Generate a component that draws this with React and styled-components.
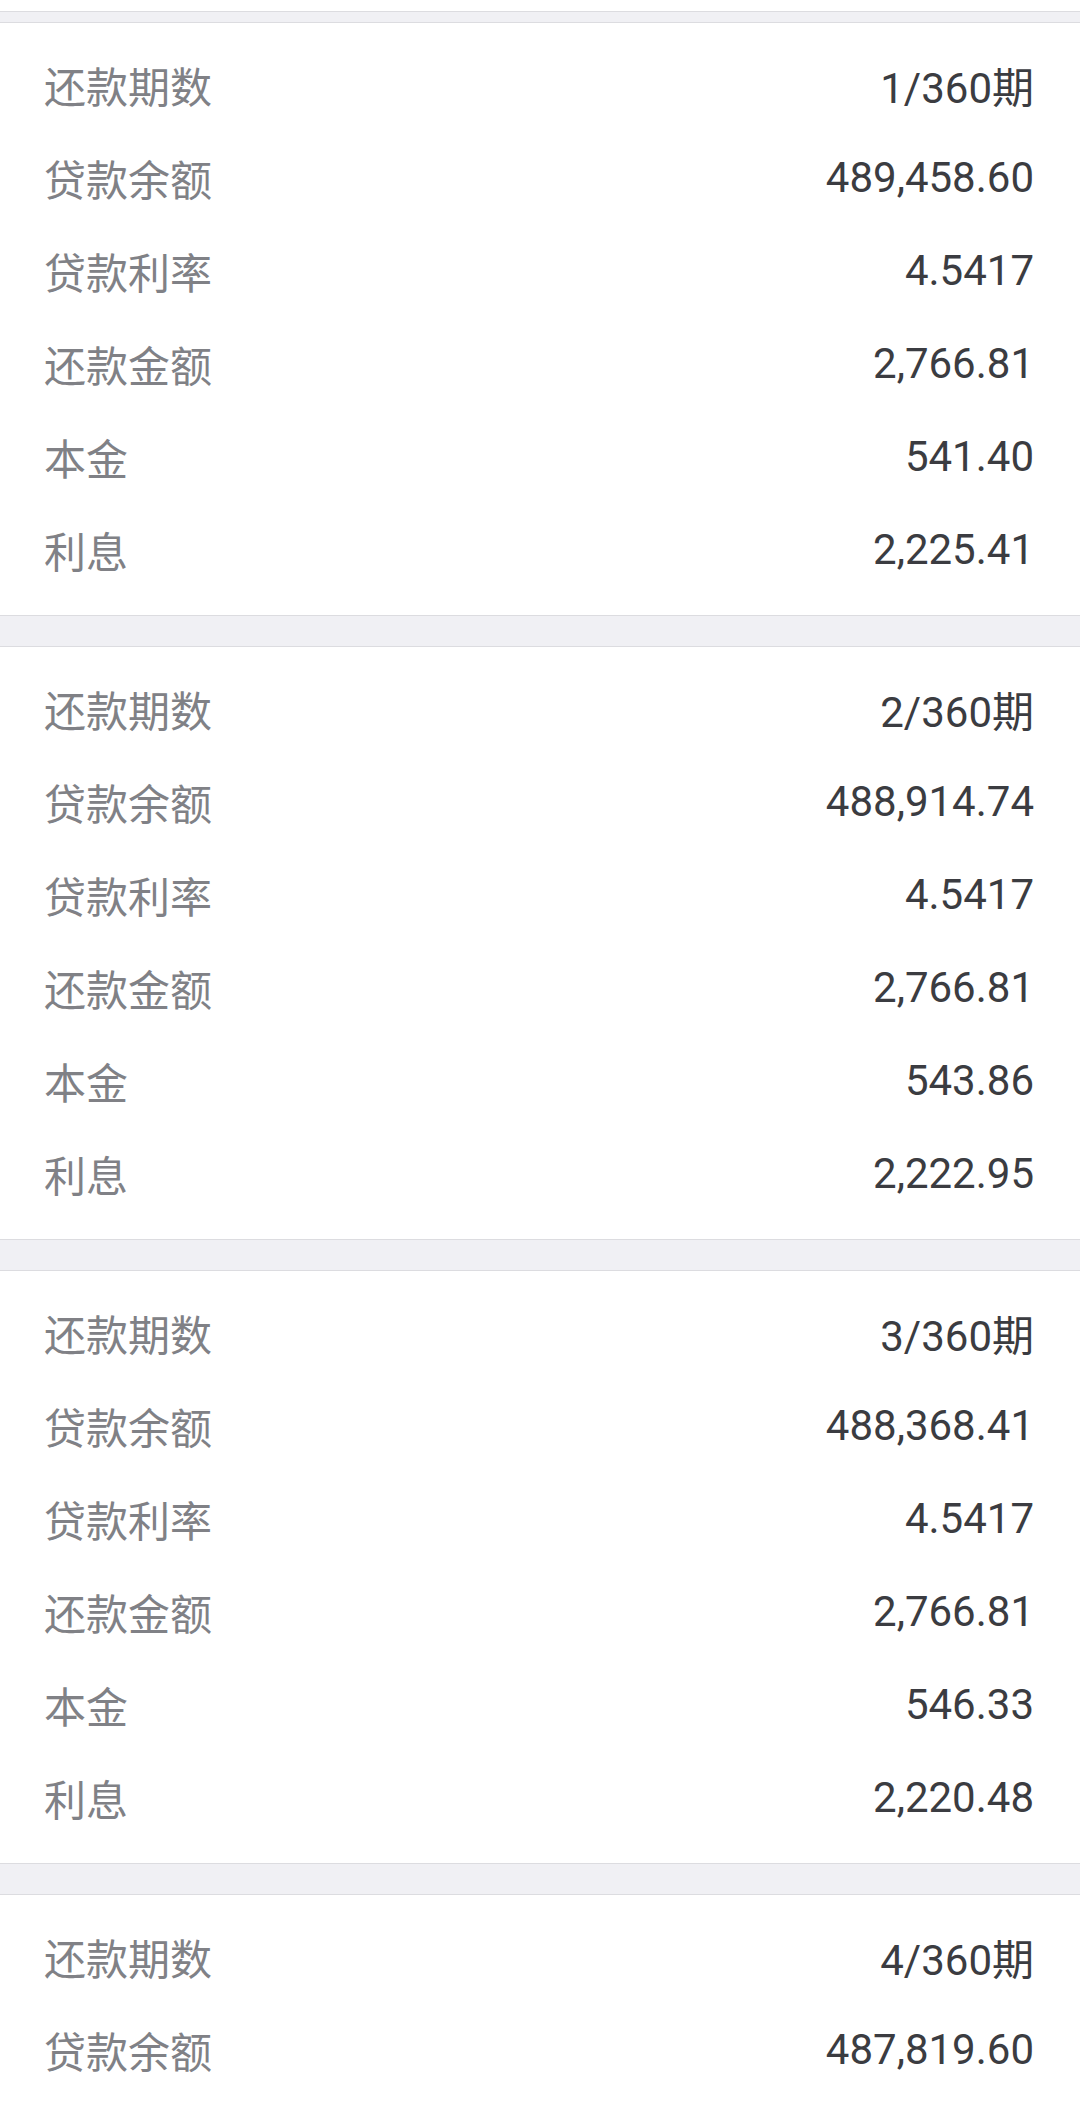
import React from "react";
import styled, { createGlobalStyle } from "styled-components";

const GlobalStyle = createGlobalStyle`
  html, body {
    margin: 0;
    padding: 0;
    background: #fff;
  }
  body {
    font-family: "Noto Sans CJK SC", "Noto Sans", sans-serif;
    -webkit-font-smoothing: antialiased;
  }
`;

const Page = styled.div`
  width: 1080px;
  background: #fff;
  padding-top: 11px;
`;

const Divider = styled.div`
  height: ${(p) => p.$h}px;
  background: #f0f0f4;
  border-top: 1px solid #dcdce0;
  border-bottom: 1px solid #dcdce0;
`;

const Card = styled.div`
  background: #fff;
  padding: 15px 46px 19px 44px;
`;

const Row = styled.div`
  height: 93px;
  display: flex;
  align-items: center;
  justify-content: space-between;
`;

const Label = styled.span`
  font-family: "Noto Sans CJK SC", sans-serif;
  font-size: 42px;
  color: #808186;
`;

const Value = styled.span`
  font-family: Roboto, "Noto Sans CJK SC", sans-serif;
  font-size: 42px;
  color: #3b3c41;
`;

const periods = [
  { n: 1, balance: "489,458.60", principal: "541.40", interest: "2,225.41" },
  { n: 2, balance: "488,914.74", principal: "543.86", interest: "2,222.95" },
  { n: 3, balance: "488,368.41", principal: "546.33", interest: "2,220.48" },
  { n: 4, balance: "487,819.60", principal: "548.82", interest: "2,217.99" },
];

function PeriodCard({ item }) {
  const rows = [
    ["还款期数", `${item.n}/360期`],
    ["贷款余额", item.balance],
    ["贷款利率", "4.5417"],
    ["还款金额", "2,766.81"],
    ["本金", item.principal],
    ["利息", item.interest],
  ];
  return (
    <Card>
      {rows.map(([label, value]) => (
        <Row key={label}>
          <Label>{label}</Label>
          <Value>{value}</Value>
        </Row>
      ))}
    </Card>
  );
}

export default function App() {
  return (
    <Page>
      <GlobalStyle />
      <Divider $h={10} />
      {periods.map((item, i) => (
        <React.Fragment key={item.n}>
          {i > 0 && <Divider $h={30} />}
          <PeriodCard item={item} />
        </React.Fragment>
      ))}
    </Page>
  );
}
